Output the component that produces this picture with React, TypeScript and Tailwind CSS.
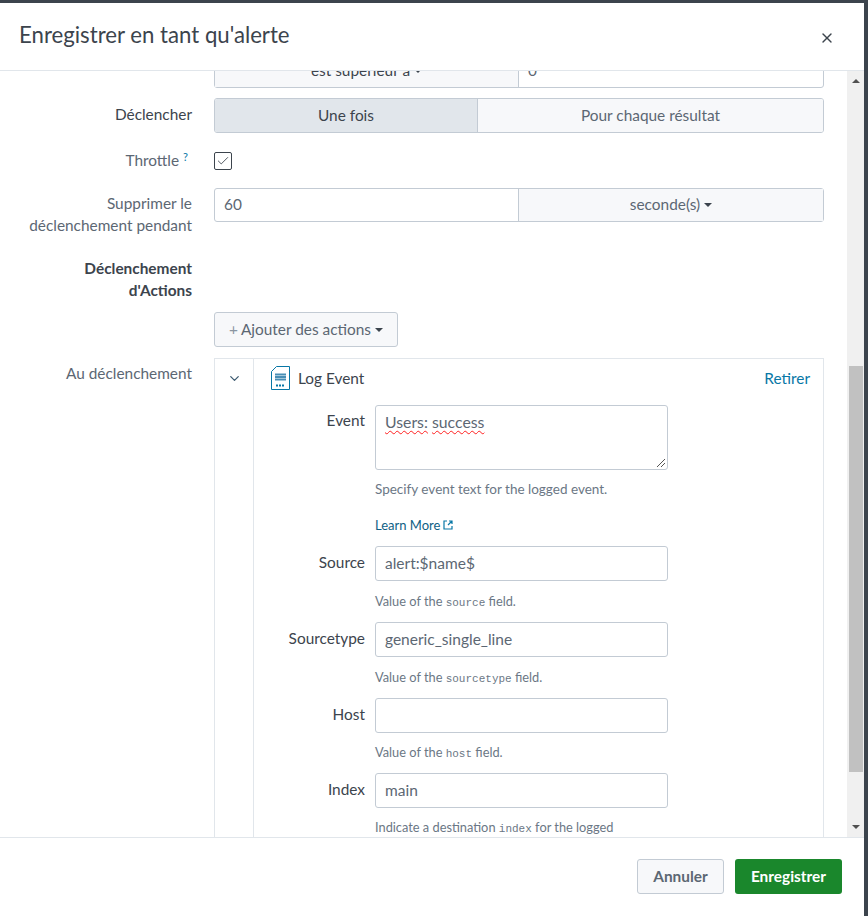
import { X, Check, ChevronDown } from 'lucide-react';

const inputBox = 'h-[35px] w-[293px] rounded-[3px] border border-[#c3cbd4] bg-white px-[9px] flex items-center text-[15.5px] text-[#5c6773]';

function Caret() {
    return <span className="ml-[4px] inline-block h-0 w-0 border-x-[4px] border-t-[4px] border-x-transparent border-t-[#3c444d] align-middle" />;
}

function Code({ children }: { children: string }) {
    return <span className="font-['Liberation_Mono',monospace] text-[11px]">{children}</span>;
}

function Field({ label, value, help, helpClass }: { label: string; value: string; help: React.ReactNode; helpClass: string }) {
    return (
        <div className="flex">
            <div className="w-[111px] pt-[5px] text-right text-[15.4px] leading-[22px] text-[#3c444d]">{label}</div>
            <div className="ml-[10px]">
                <div className={inputBox}>{value}</div>
                <div className={`text-[12.800px] leading-[16px] text-[#6b7785] ${helpClass}`}>{help}</div>
            </div>
        </div>
    );
}

export default function App() {
    return (
        <div className="flex h-[916px] w-[868px] flex-col overflow-hidden bg-[#3c444d] pt-[3px] pr-[4px] font-['Lato','Open_Sans',sans-serif] text-[#3c444d]">
            <div className="flex h-[913px] flex-col bg-white">
                {/* Header */}
                <div className="flex h-[68px] shrink-0 items-center justify-between border-b border-[#e1e6eb] pl-[19px] pr-[28px]">
                    <h1 className="mt-[-2px] text-[22.200px] font-normal leading-none text-[#3c444d]">Enregistrer en tant qu'alerte</h1>
                    <X size={16} strokeWidth={2} className="mt-[3px] mr-[1px] text-[#3c444d]" />
                </div>

                {/* Body */}
                <div className="flex min-h-0 flex-1">
                    <div className="min-w-0 flex-1 overflow-hidden pl-[214px] pr-[23px]">
                        {/* clipped row */}
                        <div className="-mt-[18px] flex h-[35px] w-[610px] rounded-[3px] border border-[#c3cbd4]">
                            <div className="flex w-[304px] items-center justify-center border-r border-[#c3cbd4] bg-[#f7f8fa] text-[15.4px]">est supérieur à<Caret /></div>
                            <div className="flex flex-1 items-center px-[9px] text-[15.4px] text-[#5c6773]">0</div>
                        </div>

                        {/* Declencher */}
                        <div className="mt-[10px] flex">
                            <div className="-ml-[214px] w-[192px] pt-[5px] text-right text-[15.4px] leading-[22px]">Déclencher</div>
                            <div className="ml-[22px] flex h-[35px] w-[610px] overflow-hidden rounded-[3px] border border-[#c3cbd4] text-[15.4px]">
                                <div className="flex w-[263px] items-center justify-center border-r border-[#c3cbd4] bg-[#e1e6eb]">Une fois</div>
                                <div className="flex flex-1 items-center justify-center bg-[#f7f8fa] text-[#5c6773]">Pour chaque résultat</div>
                            </div>
                        </div>

                        {/* Throttle */}
                        <div className="mt-[19px] flex items-center">
                            <div className="-ml-[214px] -mt-[3px] w-[192px] pr-[4px] text-right text-[15.4px] leading-[18px] text-[#5c6773]">
                                Throttle <sup className="-top-[5px] text-[11px] text-[#0877a6]">?</sup>
                            </div>
                            <div className="ml-[22px] flex h-[18px] w-[18px] items-center justify-center rounded-[2px] border border-[#3c444d] bg-white">
                                <Check size={14} strokeWidth={1.5} className="text-[#3c444d]" />
                            </div>
                        </div>

                        {/* Supprimer */}
                        <div className="mt-[18px] flex">
                            <div className="-ml-[214px] w-[192px] pt-[4px] text-right text-[15.4px] leading-[22px] text-[#5c6773]">
                                Supprimer le<br />déclenchement pendant
                            </div>
                            <div className="ml-[22px] flex h-[34px] w-[610px] rounded-[3px] border border-[#c3cbd4] text-[15.4px]">
                                <div className="flex w-[304px] items-center border-r border-[#c3cbd4] px-[9px] text-[#5c6773]">60</div>
                                <div className="flex flex-1 items-center justify-center bg-[#f7f8fa] text-[#5c6773]">seconde(s)<Caret /></div>
                            </div>
                        </div>

                        {/* Actions */}
                        <div className="-ml-[214px] mt-[21px] w-[192px] text-right text-[15.4px] font-bold leading-[22px]">
                            Déclenchement<br />d'Actions
                        </div>
                        <div className="mt-[11px] flex h-[35px] w-[184px] items-center justify-center rounded-[3px] border border-[#c3cbd4] bg-[#f7f8fa] text-[15.4px] text-[#5c6773]">
                            <span className="mr-[3px] text-[#8a95a1]">+</span>Ajouter des actions<Caret />
                        </div>

                        {/* Au declenchement */}
                        <div className="mt-[11px] flex">
                            <div className="-ml-[214px] w-[192px] pt-[4px] text-right text-[15.4px] leading-[22px] text-[#5c6773]">Au déclenchement</div>
                            <div className="ml-[22px] flex w-[610px] border border-[#e1e6eb] pb-[2px]">
                                <div className="flex w-[39px] shrink-0 justify-center border-r border-[#e1e6eb] pt-[12px]">
                                    <ChevronDown size={15} strokeWidth={2} className="text-[#3c5a70]" />
                                </div>
                                <div className="flex-1">
                                    <div className="flex items-center justify-between pl-[17px] pr-[13px] pt-[7px]">
                                        <div className="flex items-center gap-[8px]">
                                            <svg width="19" height="24" viewBox="0 0 19 24" fill="none">
                                                <path d="M5.500 .5H18.500V23.500H.5V5.500Z" stroke="#0877a6" />
                                                <path d="M4 8.500h11M4 11h11M4 13.500h11" stroke="#4a8fb5" strokeWidth="2" />
                                                <path d="M5 19.500h9" stroke="#0877a6" strokeWidth="2" strokeDasharray="2 1" />
                                            </svg>
                                            <span className="text-[15.4px] leading-[22px]">Log Event</span>
                                        </div>
                                        <a className="text-[15.4px] leading-[22px] text-[#0877a6]">Retirer</a>
                                    </div>

                                    {/* Event */}
                                    <div className="mt-[15px] flex">
                                        <div className="w-[111px] pt-[4px] text-right text-[15.4px] leading-[22px]">Event</div>
                                        <div className="ml-[10px]">
                                            <div className="relative h-[65px] w-[293px] rounded-[3px] border border-[#c3cbd4] px-[9px] pt-[6px] text-[15.800px] leading-[20px] text-[#5c6773]">
                                                <span className="underline decoration-[#ff2020] decoration-wavy decoration-1 underline-offset-2">Users:</span>{' '}
                                                <span className="underline decoration-[#ff2020] decoration-wavy decoration-1 underline-offset-2">success</span>
                                                <svg width="10" height="10" viewBox="0 0 10 10" className="absolute bottom-[1px] right-[1px]">
                                                    <path d="M1 9 9 1M5 9 9 5" stroke="#555" strokeWidth="1" />
                                                </svg>
                                            </div>
                                            <div className="mt-[11px] text-[13.500px] leading-[16px] text-[#6b7785]">Specify event text for the logged event.</div>
                                            <div className="mt-[20px] flex items-center gap-[3px] text-[13px] leading-[16px] text-[#0f5f85]">
                                                Learn More
                                                <svg width="10" height="10" viewBox="0 0 10 10" fill="none" stroke="#0877a6" strokeWidth="1.200">
                                                    <path d="M4 1H1V9H9V6M5 5 9 1M6 1H9V4" />
                                                </svg>
                                            </div>
                                        </div>
                                    </div>

                                    <div className="mt-[13px]">
                                        <Field label="Source" value="alert:$name$" helpClass="mt-[12px] mb-[11px]" help={<>Value of the <Code>source</Code> field.</>} />
                                        <Field label="Sourcetype" value="generic_single_line" helpClass="mt-[12px] mb-[11px]" help={<>Value of the <Code>sourcetype</Code> field.</>} />
                                        <Field label="Host" value="" helpClass="mt-[11px] mb-[11px]" help={<>Value of the <Code>host</Code> field.</>} />
                                        <Field label="Index" value="main" helpClass="mt-[11px]" help={<>Indicate a destination <Code>index</Code> for the logged</>} />
                                    </div>
                                </div>
                            </div>
                        </div>
                    </div>

                    {/* Scrollbar */}
                    <div className="flex w-[17px] shrink-0 flex-col items-center bg-[#f0f0f0]">
                        <div className="flex h-[17px] w-full items-center justify-center pt-[3px]">
                            <span className="h-0 w-0 border-x-[4px] border-b-[4px] border-x-transparent border-b-[#505050]" />
                        </div>
                        <div className="mt-[278px] h-[406px] w-[14px] bg-[#c1c1c1]" />
                        <div className="mt-auto flex h-[17px] w-full items-center justify-center pb-[4px]">
                            <span className="h-0 w-0 border-x-[4px] border-t-[4px] border-x-transparent border-t-[#505050]" />
                        </div>
                    </div>
                </div>

                {/* Footer */}
                <div className="flex h-[79px] shrink-0 items-start justify-end gap-[11px] border-t border-[#e1e6eb] pr-[22px] pt-[21px]">
                    <button className="h-[35px] w-[87px] rounded-[3px] border border-[#c3cbd4] bg-[#f7f8fa] text-[15.4px] font-bold text-[#5c6773]">Annuler</button>
                    <button className="h-[35px] w-[107px] rounded-[3px] bg-[#1a872c] text-[15.4px] font-bold text-white">Enregistrer</button>
                </div>
            </div>
        </div>
    );
}
